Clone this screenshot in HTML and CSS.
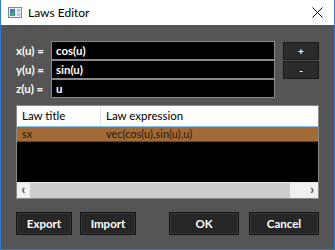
FILE: index.html
```html
<!DOCTYPE html>
<html lang="en">
<head>
    <meta charset="UTF-8">
    <title>Laws Editor</title>
    <link rel="stylesheet" href="styles.css">
</head>
<body>
    <div class="window">
        <!-- Title bar -->
        <div class="titlebar">
            <svg class="app-icon" width="14" height="11" viewBox="0 0 14 11">
                <rect x="0.5" y="0.5" width="13" height="10" fill="#e8eef4" stroke="#7a8a9a"/>
                <rect x="2" y="2" width="5" height="7" fill="#3d7fc1"/>
                <rect x="3" y="5" width="3" height="4" fill="#4caf50"/>
                <rect x="9" y="2" width="3" height="3" fill="#b8c4cf"/>
                <rect x="9" y="6" width="3" height="3" fill="#b8c4cf"/>
            </svg>
            <span class="title">Laws Editor</span>
            <svg class="close" width="11" height="11" viewBox="0 0 11 11">
                <path d="M0.5 0.5 L10.5 10.5 M10.5 0.5 L0.5 10.5" stroke="#111" stroke-width="1"/>
            </svg>
        </div>

        <div class="content">
            <!-- Formula rows -->
            <div class="formula">
                <div class="fields">
                    <label>x(u) =</label>
                    <div class="field">cos(u)</div>
                    <label>y(u) =</label>
                    <div class="field">sin(u)</div>
                    <label>z(u) =</label>
                    <div class="field">u</div>
                </div>
                <div class="side-buttons">
                    <button class="small-btn">+</button>
                    <button class="small-btn">-</button>
                </div>
            </div>

            <!-- Laws table -->
            <div class="table">
                <div class="thead">
                    <div class="col-title">Law title</div>
                    <div class="col-expr">Law expression</div>
                </div>
                <div class="row selected">
                    <div class="col-title">sx</div>
                    <div class="col-expr">vec(cos(u),sin(u),u)</div>
                </div>
                <div class="table-space"></div>
                <div class="hscroll">
                    <div class="arrow">&lsaquo;</div>
                    <div class="track"></div>
                    <div class="arrow right">&rsaquo;</div>
                </div>
            </div>

            <!-- Footer buttons -->
            <div class="footer">
                <div class="group">
                    <button class="btn">Export</button>
                    <button class="btn">Import</button>
                </div>
                <div class="group">
                    <button class="btn wide">OK</button>
                    <button class="btn wide">Cancel</button>
                </div>
            </div>
        </div>
    </div>
</body>
</html>
```

FILE: styles.css
```css
body { margin: 0; font-family: Lato, "Open Sans", sans-serif; }
.window { width: 335px; height: 250px; box-sizing: border-box; border: 1px solid #2b7bd6; border-top: none; background-color: #555555; display: flex; flex-direction: column; }
.titlebar { height: 25px; background-color: #ffffff; display: flex; align-items: center; padding: 0 9px 0 7px; box-sizing: border-box; margin: 0 -1px; border-left: 1px solid #2b7bd6; border-right: 1px solid #2b7bd6; }
.app-icon { margin-right: 6px; }
.title { font-size: 12px; color: #000; flex: 1; }
.close { margin-right: 2px; }
.content { padding: 16px 15px 0 15px; display: flex; flex-direction: column; }
.formula { display: flex; gap: 8px; }
.fields { display: grid; grid-template-columns: 35px 224px; grid-auto-rows: 19px; }
.fields label { color: #fff; font-weight: bold; font-size: 11.5px; line-height: 19px; }
.field { background-color: #000; border: 1px solid #8a8a8a; box-sizing: border-box; color: #fff; font-weight: bold; font-size: 11.5px; line-height: 17px; padding-left: 4px; }
.side-buttons { display: flex; flex-direction: column; gap: 1px; padding-top: 1px; }
.small-btn { width: 36px; height: 18px; background-color: #2b2b2b; border: 1px solid #1a1a1a; color: #fff; font-weight: bold; font-size: 10px; padding: 0; font-family: inherit; line-height: 14px; }
.table { margin-top: 7px; height: 94px; border: 1px solid #8a8a8a; box-sizing: border-box; background-color: #000; display: flex; flex-direction: column; }
.thead { height: 20px; background-color: #fff; display: flex; border-bottom: 1px solid #86c2ea; font-size: 11.5px; color: #000; }
.thead .col-title { border-right: 1px solid #e5e5e5; }
.col-title { width: 78px; padding-left: 5px; line-height: 20px; }
.col-expr { padding-left: 5px; line-height: 20px; }
.row { display: flex; font-size: 11px; height: 14px; }
.row .col-title, .row .col-expr { line-height: 14px; }
.row .col-title { width: 79px; }
.selected { background-color: #a26a36; color: #2b1a0c; border-bottom: 1px solid #2b4e8a; }
.table-space { flex: 1; }
.hscroll { height: 15px; background-color: #cdcdcd; display: flex; border-top: 1px solid #e8e8e8; }
.arrow { width: 13px; background-color: #f0f0f0; font-size: 13px; line-height: 13px; text-align: center; color: #444; font-weight: bold; }
.arrow.right { width: 28px; text-align: right; padding-right: 4px; box-sizing: border-box; }
.track { flex: 1; }
.footer { margin-top: 13px; display: flex; justify-content: space-between; }
.group { display: flex; gap: 8px; }
.group + .group { gap: 10px; }
.btn { width: 56px; height: 23px; background-color: #262626; border: 1px solid #111; box-shadow: inset 0 0 0 1px #3a3a3a; color: #fff; font-weight: bold; font-size: 11.5px; font-family: inherit; padding: 0; }
.btn.wide { width: 70px; }
```
